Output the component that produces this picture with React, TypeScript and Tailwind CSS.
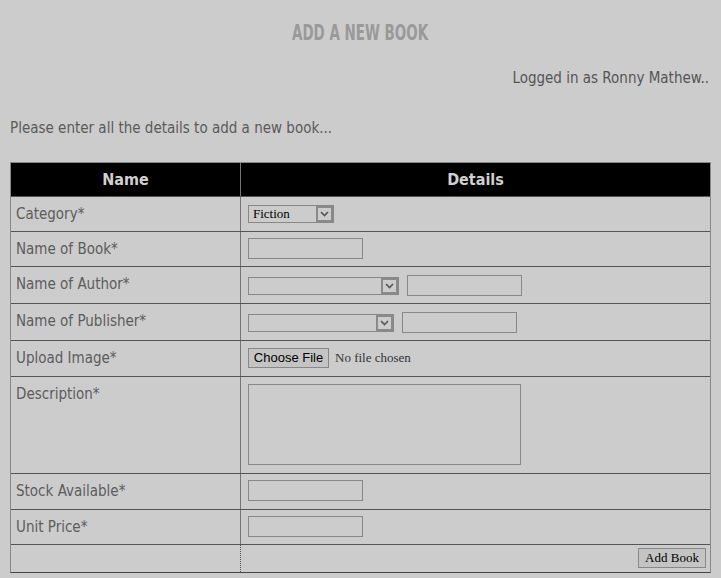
import React from "react";

const font = { fontFamily: '"DejaVu Sans Condensed", "Liberation Sans", sans-serif' };

function Chevron() {
  return (
    <svg width="9" height="6" viewBox="0 0 9 6">
      <path d="M1 1 L4.5 4.5 L8 1" stroke="#555" strokeWidth="1.6" fill="none" />
    </svg>
  );
}

function FakeSelect({ w, text }: { w: number; text?: string }) {
  return (
    <div
      className="flex h-[18px] border border-[#888] bg-[#cccccc] items-stretch"
      style={{ width: w }}
    >
      <div className="flex-1 pl-[4px] text-[13px] leading-[16px] text-black" style={{ fontFamily: '"Liberation Serif", serif' }}>
        {text}
      </div>
      <div className="w-[17px] border-2 border-[#8a8a8a] flex items-center justify-center bg-[#cccccc]">
        <Chevron />
      </div>
    </div>
  );
}

function TextBox({ w = 115 }: { w?: number }) {
  return <div className="h-[21px] border border-[#888]" style={{ width: w }} />;
}

function Row({ h, label, children, top = 10 }: { h: number; label: string; children?: React.ReactNode; top?: number }) {
  return (
    <div className="flex border-t border-[#555]" style={{ height: h + 1 }}>
      <div className="w-[230px] border-r border-[#777] pl-[5px] text-[15px] leading-[20px] text-[#5c5c5c]" style={{ paddingTop: 7 }}>
        {label}
      </div>
      <div className="flex-1 pl-[7px]" style={{ paddingTop: top }}>
        {children}
      </div>
    </div>
  );
}

export default function App() {
  return (
    <div className="w-[721px] h-[578px] bg-[#cccccc] overflow-hidden" style={font}>
      <div className="h-[64px] flex items-center justify-center">
        <span className="inline-block text-[22px] font-bold text-[#999999] scale-x-[0.68]">ADD A NEW BOOK</span>
      </div>
      <div className="h-[28px] flex items-center justify-end pr-[12px] text-[15px] text-[#555555]">
        Logged in as Ronny Mathew..
      </div>
      <div className="h-[22px]" />
      <div className="h-[28px] flex items-center pl-[10px] text-[15px] text-[#5a5a5a]">
        Please enter all the details to add a new book...
      </div>
      <div className="h-[20px]" />
      <div className="ml-[10px] w-[701px] border-t border-l border-r border-[#888] border-b-[#444] border-b">
        <div className="flex h-[33px] bg-black text-[#d0d0d0] font-bold text-[16px]">
          <div className="w-[230px] border-r border-[#777] flex items-center justify-center">Name</div>
          <div className="flex-1 flex items-center justify-center">Details</div>
        </div>
        <Row h={34} label="Category*" top={8}>
          <FakeSelect w={86} text="Fiction" />
        </Row>
        <Row h={34} label="Name of Book*" top={6}>
          <TextBox />
        </Row>
        <Row h={36} label="Name of Author*" top={8}>
          <div className="flex items-center gap-[8px]">
            <FakeSelect w={151} />
            <TextBox />
          </div>
        </Row>
        <Row h={36} label="Name of Publisher*" top={8}>
          <div className="flex items-center gap-[8px]">
            <FakeSelect w={146} />
            <TextBox />
          </div>
        </Row>
        <Row h={35} label="Upload Image*" top={7}>
          <div className="flex items-center gap-[6px]">
            <div
              className="h-[20px] w-[81px] border border-[#888] bg-[#c4c4c4] flex items-center justify-center text-[13px] text-black"
              style={{ fontFamily: '"Liberation Sans", Arial, sans-serif' }}
            >
              Choose File
            </div>
            <span className="text-[13px] text-[#333]" style={{ fontFamily: '"Liberation Serif", serif' }}>
              No file chosen
            </span>
          </div>
        </Row>
        <Row h={96} label="Description*" top={7}>
          <div className="w-[273px] h-[81px] border border-[#888]" />
        </Row>
        <Row h={35} label="Stock Available*" top={6}>
          <TextBox />
        </Row>
        <Row h={34} label="Unit Price*" top={6}>
          <TextBox />
        </Row>
        <div className="flex border-t border-[#555] h-[28px]">
          <div className="w-[230px] border-r border-dotted border-[#555]" />
          <div className="flex-1 flex items-start justify-end pr-[4px] pt-[3px]">
            <div
              className="h-[20px] w-[68px] border border-[#888] bg-[#c4c4c4] flex items-center justify-center text-[13px] text-black"
              style={{ fontFamily: '"Liberation Serif", serif' }}
            >
              Add Book
            </div>
          </div>
        </div>
      </div>
    </div>
  );
}
